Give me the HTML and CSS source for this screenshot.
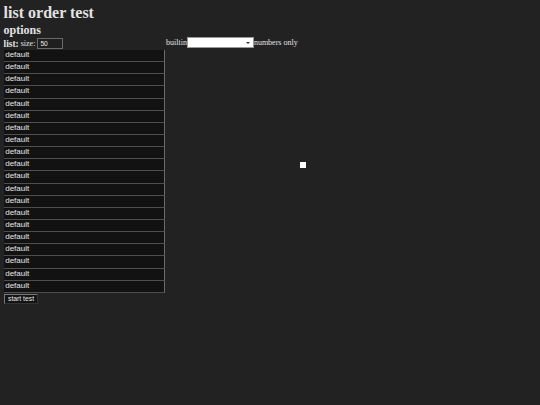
FILE: index.html
```html
<!DOCTYPE html>
<html>
<head>
<meta charset="utf-8">
<link rel="stylesheet" href="styles.css">
</head>
<body>
<h1 class="title">list order test</h1>
<h2 class="subtitle">options</h2>
<div class="layout">
  <div class="left">
    <div class="list-head"><b class="list-label">list:</b> <span class="size-label">size:</span> <input class="size-input" value="50"></div>
    <div class="rows">
      <div class="row">default</div>
      <div class="row">default</div>
      <div class="row">default</div>
      <div class="row">default</div>
      <div class="row">default</div>
      <div class="row">default</div>
      <div class="row">default</div>
      <div class="row">default</div>
      <div class="row">default</div>
      <div class="row">default</div>
      <div class="row">default</div>
      <div class="row">default</div>
      <div class="row">default</div>
      <div class="row">default</div>
      <div class="row">default</div>
      <div class="row">default</div>
      <div class="row">default</div>
      <div class="row">default</div>
      <div class="row">default</div>
      <div class="row">default</div>
    </div>
    <button class="start">start test</button>
  </div>
  <div class="right">
    <div class="controls">
      <span class="ctl-text">builtin</span><span class="select"><span class="arrow"></span></span><span class="ctl-text">numbers only</span>
    </div>
    <div class="canvas"></div>
  </div>
</div>
</body>
</html>
```

FILE: styles.css
```css
html, body {
  background: #232223;
}
body {
  margin: 0;
  padding: 4px 3.6px;
  color: #e2e2e2;
  font-family: "Liberation Serif", "Times New Roman", serif;
  font-size: 8px;
}
.title {
  margin: 0;
  font-size: 16px;
  line-height: 18px;
  font-weight: bold;
}
.subtitle {
  margin: 1px 0 0 0;
  font-size: 12px;
  line-height: 14px;
  font-weight: bold;
}
.layout {
  display: flex;
  align-items: flex-start;
}
.left {
  width: 161px;
  flex: none;
}
.list-head {
  height: 13px;
  display: flex;
  align-items: center;
  gap: 2px;
}
.list-label {
  font-size: 9.4px;
}
.size-label {
  font-size: 8px;
}
.size-input {
  width: 20px;
  height: 8.5px;
  padding: 0 2px;
  margin: 0;
  background: #1f1f1f;
  color: #e8e8e8;
  border: 1px solid #6a6a6a;
  font-family: "Liberation Sans", Arial, sans-serif;
  font-size: 6.7px;
  line-height: 8px;
}
.rows {
  display: flex;
  flex-direction: column;
}
.row {
  box-sizing: border-box;
  height: 12.15px;
  line-height: 10.5px;
  background: #121212;
  border-bottom: 1px solid #4e4e4e;
  border-right: 1px solid #6b6b6b;
  padding-left: 1.6px;
  font-family: "Liberation Sans", Arial, sans-serif;
  font-size: 8px;
  color: #e6e6e6;
}
.start {
  display: block;
  margin: 1px 0 0 0.4px;
  padding: 0 3px;
  height: 10px;
  background: #141414;
  color: #e6e6e6;
  border: 1px solid #777;
  border-right-color: #333;
  border-bottom-color: #333;
  font-family: "Liberation Sans", Arial, sans-serif;
  font-size: 6.8px;
  line-height: 7px;
}
.right {
  flex: 1;
  padding-left: 1.4px;
}
.controls {
  display: flex;
  align-items: center;
  height: 11px;
}
.select {
  position: relative;
  display: block;
  width: 67px;
  height: 10.4px;
  background: #fff;
  border: 0.5px solid #999;
  box-sizing: border-box;
}
.arrow {
  position: absolute;
  right: 2.5px;
  top: 3.6px;
  width: 0;
  height: 0;
  border-left: 2px solid transparent;
  border-right: 2px solid transparent;
  border-top: 2.4px solid #333;
}
.canvas {
  width: 5.5px;
  height: 5.5px;
  background: #fff;
  margin: 114px 0 0 134.5px;
}
```
